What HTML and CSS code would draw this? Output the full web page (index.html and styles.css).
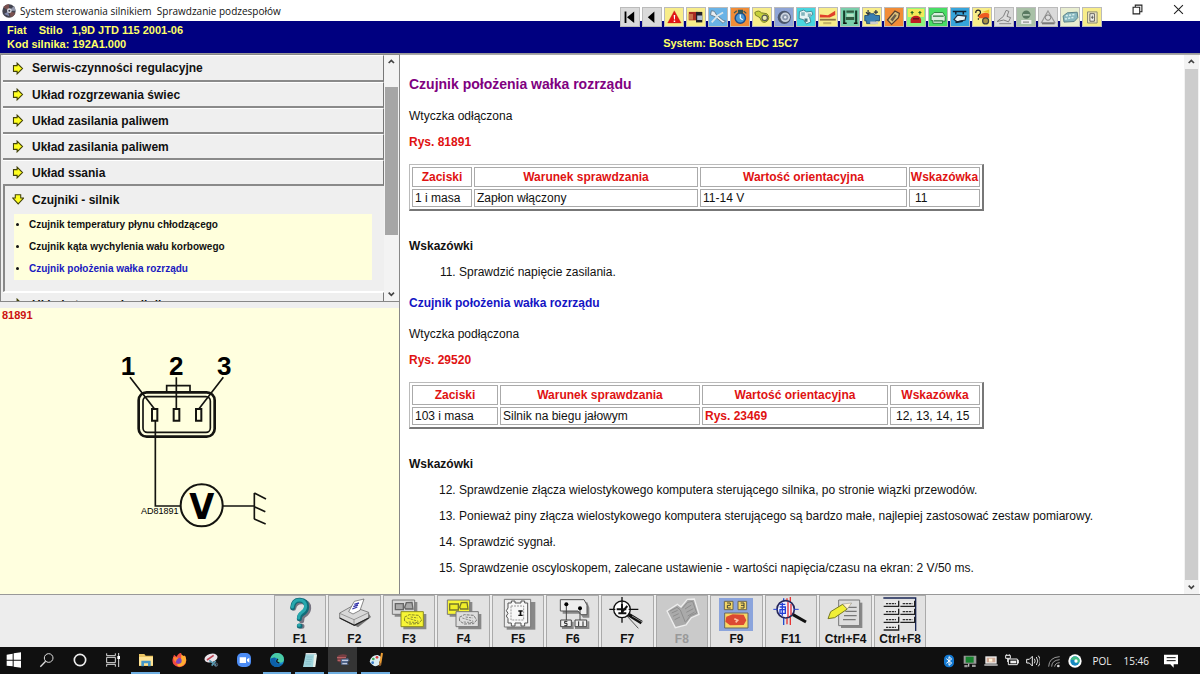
FILE: index.html
```html
<!DOCTYPE html>
<html lang="pl">
<head>
<meta charset="utf-8">
<title>System sterowania silnikiem</title>
<link rel="stylesheet" href="styles.css">
</head>
<body>
<div class="app">
  <header class="titlebar">
    <svg class="app-icon" viewBox="0 0 42 42"><circle cx="21" cy="21" r="20" fill="#434450"/><path d="M21 21 4 10A20 20 0 0 1 21 1zM21 21 40 27A20 20 0 0 1 26 40z" fill="#79514f"/><path d="M21 21 35 7A20 20 0 0 1 41 20z" fill="#9297ab"/><path d="M6 30 18 23l4 14z" fill="#8088ab"/><circle cx="22" cy="20" r="7" fill="#d8dce6"/><circle cx="22" cy="20" r="3" fill="#3d4152"/></svg>
    <h1 class="title">System sterowania silnikiem&nbsp; Sprawdzanie podzespołów</h1>
    <div class="window-controls">
      <button class="win-btn" aria-label="Przywróć"><svg viewBox="0 0 30 30"><path d="M3 9h18v18H3zM9 9V3h18v18h-6" fill="none" stroke="#222" stroke-width="3"/></svg></button>
      <button class="win-btn" aria-label="Zamknij"><svg viewBox="0 0 30 30"><path d="m3 3 24 24M27 3 3 27" stroke="#222" stroke-width="3"/></svg></button>
    </div>
  </header>

  <div class="toolbar">
    <button class="tool grey" aria-label="Pierwszy"><svg viewBox="0 0 60 60"><path d="M12 12h6v38h-6zM44 12v38L20 31z"/></svg></button>
    <button class="tool grey" aria-label="Wstecz"><svg viewBox="0 0 60 60"><path d="M38 12v38L16 31z"/></svg></button>
    <button class="tool yellow" aria-label="Ostrzeżenia"><svg viewBox="0 0 60 60"><path d="M31 9 54 50H9z" fill="#e41414" stroke="#a22"/><path d="M29 23h5l-1 15h-3zM29 42h5v5h-5z" fill="#fff"/></svg></button>
    <button class="tool yellow" aria-label="Identyfikacja"><svg viewBox="0 0 60 60"><path d="M6 13h30v28H6z" fill="#a62a22"/><path d="M6 20h14v19H6z" fill="#c9714a"/><path d="M30 13h21v35H30z" fill="#221f29"/><path d="M34 25h17v15H34z" fill="#aebdd2"/></svg></button>
    <button class="tool sky" aria-label="Narzędzia"><svg viewBox="0 0 60 60"><path d="m8 9 10 2 7 12 22 18 8 2-8 8-27-22-15-6z" fill="#e8eef2" stroke="#627a8c" stroke-width="3"/><path d="m9 48 21-23 17-10" stroke="#d7e4ea" stroke-width="6" fill="none"/></svg></button>
    <button class="tool orange" aria-label="Czasy napraw"><svg viewBox="0 0 60 60"><circle cx="31" cy="34" r="17" fill="#4a9ad4" stroke="#1e4e8c" stroke-width="5"/><path d="M25 8h13v8H25zM10 17l9-8M51 18l-9-8" fill="#355" stroke="#355" stroke-width="4"/><path d="M31 34V22M31 34l8 5" stroke="#fff" stroke-width="4"/></svg></button>
    <button class="tool yellow" aria-label="Pasek rozrządu"><svg viewBox="0 0 60 60"><path d="M6 15q13-10 22 1l18 3q12 12 2 24-12 10-21-1-2-12-11-14Q6 27 6 15z" fill="#c6d03b" stroke="#70781e" stroke-width="3"/><circle cx="39" cy="33" r="9" fill="#ececac" stroke="#555" stroke-width="4"/></svg></button>
    <button class="tool blue" aria-label="Opony"><svg viewBox="0 0 60 60"><circle cx="31" cy="31" r="22" fill="#4b566b"/><circle cx="34" cy="31" r="16" fill="#ccd4df"/><circle cx="34" cy="31" r="10" fill="#8996aa"/><circle cx="34" cy="31" r="4" fill="#e9edf5"/></svg></button>
    <button class="tool cyan" aria-label="Klimatyzacja"><svg viewBox="0 0 60 60"><path d="m8 12 14-5 10 6 17-2 4 10-11 9 4 17-15 6-9-14-15-4z" fill="#e6f4f4" stroke="#3b8492" stroke-width="3"/><path d="M14 14h12v12H14zM36 18h12v12H36z" fill="#83b5bc"/><path d="M25 35h10v11H25z" fill="#437984"/></svg></button>
    <button class="tool yellow" aria-label="Geometria"><svg viewBox="0 0 60 60"><path d="M3 22 30 24 54 9v14l-18 9H3z" fill="#e0402a"/><path d="M3 36h53v6H3z" fill="#8c7446"/><path d="M14 47h27v7H14z" fill="#c6b568"/></svg></button>
    <button class="tool mint" aria-label="Podnośnik"><svg viewBox="0 0 60 60"><path d="M7 8h7v42H7zM47 8h7v42h-7z" fill="#173e2b"/><path d="M18 8h25v8H18zM16 30h28v10H16z" fill="#325d42"/><path d="M20 20h22v9H20z" fill="#b7e3c3"/><path d="M7 48h12v5H7zM43 48h12v5H43z" fill="#111"/></svg></button>
    <button class="tool yellow" aria-label="Silnik"><svg viewBox="0 0 60 60"><path d="M6 25h12l5-6h14l4 6h14v18H42v9H12v-9H6z" fill="#397fb1" stroke="#244d76" stroke-width="3"/><path d="M17 7v15M10 14l7 8 7-8M43 7v14M36 14h14" stroke="#283542" stroke-width="4" fill="none"/><path d="M24 45h26v9H24z" fill="#ccc"/></svg></button>
    <button class="tool orange" aria-label="Świece"><svg viewBox="0 0 60 60"><path d="m8 40 25-30 15 8-3 14-23 23z" fill="#dbc17b" stroke="#574031" stroke-width="4"/><path d="m18 38 15-18 6 5-14 20z" fill="#685c4a"/></svg></button>
    <button class="tool lime" aria-label="Diagnostyka"><svg viewBox="0 0 60 60"><path d="M3 3h54v27H3z" fill="#f3e957"/><path d="M12 15h10M38 15h10M17 10v12M43 10v12" stroke="#236724" stroke-width="4"/><path d="M12 38q4-12 18-12t17 12v12H12z" fill="#c11f24"/><path d="M20 36h20" stroke="#501318" stroke-width="4"/></svg></button>
    <button class="tool green" aria-label="Druk"><svg viewBox="0 0 60 60"><path d="M17 15h29l8 13v16H45v7H13v-9H7V25z" fill="#dcefe0" stroke="#277c3b" stroke-width="3"/><path d="M13 27h36M16 43h30" stroke="#277c3b" stroke-width="4"/></svg></button>
    <button class="tool azure" aria-label="Układ hamulcowy"><svg viewBox="0 0 60 60"><path d="M6 12h45M16 12v10M41 12v10" stroke="#123" stroke-width="5"/><path d="m10 38 12-14 28 3-3 13-27 6z" fill="#e8f4f8" stroke="#234" stroke-width="4"/><path d="m15 48 24-4" stroke="#123" stroke-width="6"/></svg></button>
    <button class="tool yellow" aria-label="Kody usterek"><svg viewBox="0 0 60 60"><path d="M9 17q0-10 8-10t8 8q0 5-7 9v5M18 34v5" fill="none" stroke="#222" stroke-width="4"/><path d="M18 27q18-18 36-8v15H20z" fill="#ef5b20"/><path d="M30 13 54 5v12z" fill="#eec72e"/><circle cx="42" cy="43" r="10" fill="#a89248" stroke="#444" stroke-width="4"/></svg></button>
    <button class="tool grey" aria-label="Poduszka"><svg viewBox="0 0 60 60"><path d="M7 45 28 28l9-20 9 3-6 17 12 4-7 14-16-6z" fill="#ddd" stroke="#777" stroke-width="3"/><path d="M14 52h40" stroke="#999" stroke-width="4"/></svg></button>
    <button class="tool sage" aria-label="Immobiliser"><svg viewBox="0 0 60 60"><circle cx="31" cy="22" r="14" fill="#597961"/><path d="M20 23h22" stroke="#bfd2bf" stroke-width="5"/><path d="M14 40h34v13H14z" fill="#eee"/><path d="M20 47h20" stroke="#888" stroke-width="4"/></svg></button>
    <button class="tool grey" aria-label="Hamulce"><svg viewBox="0 0 60 60"><path d="M30 10 53 49H8z" fill="none" stroke="#999" stroke-width="4"/><circle cx="30" cy="32" r="9" fill="#ddd" stroke="#777" stroke-width="3"/><path d="M10 52h42" stroke="#777" stroke-width="5"/></svg></button>
    <button class="tool pale" aria-label="Zespół napędowy"><svg viewBox="0 0 60 60"><path d="m7 27 14-11 33-2 2 18-12 13-34 2z" fill="#88b7bf" stroke="#527b83" stroke-width="3"/><path d="m16 26 31-5M13 37l31-6" stroke="#d6eeee" stroke-width="5" stroke-dasharray="7 4"/></svg></button>
    <button class="tool yellow" aria-label="Schematy"><svg viewBox="0 0 60 60"><path d="M15 13h32v37H15z" fill="#eee5be" stroke="#858571" stroke-width="3"/><path d="M23 19h15v25H23zM31 25v12M27 31h8" fill="#f8f8ef" stroke="#555" stroke-width="3"/></svg></button>
  </div>

  <div class="vehicle">
    <div class="vehicle-id">
      <div>Fiat&nbsp;&nbsp;&nbsp; Stilo&nbsp;&nbsp; 1,9D JTD 115 2001-06</div>
      <div>Kod silnika: 192A1.000</div>
    </div>
    <div class="system">System: Bosch EDC 15C7</div>
  </div>

  <main class="panes">
    <aside class="side">
      <div class="nav-frame">
        <nav class="nav">
          <button class="nav-item"><svg class="arrow" viewBox="0 0 33 36"><path d="M4 10h10V3l15 15-15 15v-7H4z"/></svg>Serwis-czynności regulacyjne</button>
          <button class="nav-item"><svg class="arrow" viewBox="0 0 33 36"><path d="M4 10h10V3l15 15-15 15v-7H4z"/></svg>Układ rozgrzewania świec</button>
          <button class="nav-item"><svg class="arrow" viewBox="0 0 33 36"><path d="M4 10h10V3l15 15-15 15v-7H4z"/></svg>Układ zasilania paliwem</button>
          <button class="nav-item"><svg class="arrow" viewBox="0 0 33 36"><path d="M4 10h10V3l15 15-15 15v-7H4z"/></svg>Układ zasilania paliwem</button>
          <button class="nav-item"><svg class="arrow" viewBox="0 0 33 36"><path d="M4 10h10V3l15 15-15 15v-7H4z"/></svg>Układ ssania</button>
          <div class="nav-open">
            <button class="nav-item open" aria-expanded="true"><svg class="arrow" viewBox="0 0 33 36"><path d="M9 5h15v9h8L17 30 2 14h7z"/></svg>Czujniki - silnik</button>
            <ul class="sub">
              <li><a href="#temp">Czujnik temperatury płynu chłodzącego</a></li>
              <li><a href="#kat">Czujnik kąta wychylenia wału korbowego</a></li>
              <li><a class="current" href="#walek">Czujnik położenia wałka rozrządu</a></li>
            </ul>
          </div>
          <button class="nav-item"><svg class="arrow" viewBox="0 0 33 36"><path d="M4 10h10V3l15 15-15 15v-7H4z"/></svg>Układ sterowania silnika</button>
        </nav>
        <div class="scroll">
          <svg class="chev" viewBox="0 0 42 42"><path d="m14 24 8-8 8 8"/></svg>
          <div class="track"><div class="thumb dark"></div></div>
          <svg class="chev" viewBox="0 0 42 42"><path d="m14 17 8 8 8-8"/></svg>
        </div>
      </div>
      <section class="figure">
        <div class="fig-no">81891</div>
        <svg class="connector" viewBox="60 30 480 540">
          <g fill="none" stroke="#141410">
            <rect x="116" y="157" width="228" height="133" rx="24" stroke-width="8"/>
            <rect x="129" y="170" width="202" height="107" rx="13" stroke-width="5"/>
            <path d="M200 155v-18h70v18" stroke-width="5"/>
            <path d="m90 112 73 94M229 112v94M370 112l-73 94M166 243v255h75M369 498h94M463 459v79M463 459l35 18M463 500l33 15M463 537l34 15" stroke-width="5"/>
            <path d="M156 207h16v35h-16zM221 207h17v35h-17zM288 207h16v35h-16z" stroke-width="6"/>
            <circle cx="305" cy="496" r="63" stroke-width="6"/>
          </g>
          <g class="pins"><text x="84" y="105">1</text><text x="229" y="105">2</text><text x="373" y="105">3</text></g>
          <text class="volt" x="305" y="538">V</text>
          <text class="drawing-no" x="179" y="523">AD81891</text>
        </svg>
      </section>
    </aside>

    <section class="content">
      <article class="doc">
        <h2 class="heading">Czujnik położenia wałka rozrządu</h2>
        <p>Wtyczka odłączona</p>
        <p><a class="ref" href="#81891">Rys. 81891</a></p>
        <table class="data">
          <colgroup><col class="w62"><col class="w226"><col class="w209"><col></colgroup>
          <tr><th>Zaciski</th><th>Warunek sprawdzania</th><th>Wartość orientacyjna</th><th>Wskazówka</th></tr>
          <tr><td>1 i masa</td><td>Zapłon włączony</td><td>11-14 V</td><td class="hint">11</td></tr>
        </table>
        <h4 class="notes-title">Wskazówki</h4>
        <ol class="notes" start="11"><li>Sprawdzić napięcie zasilania.</li></ol>
        <h3 class="subheading">Czujnik położenia wałka rozrządu</h3>
        <p>Wtyczka podłączona</p>
        <p><a class="ref" href="#29520">Rys. 29520</a></p>
        <table class="data">
          <colgroup><col class="w88"><col class="w202"><col class="w188"><col></colgroup>
          <tr><th>Zaciski</th><th>Warunek sprawdzania</th><th>Wartość orientacyjna</th><th>Wskazówka</th></tr>
          <tr><td>103 i masa</td><td>Silnik na biegu jałowym</td><td><a class="ref" href="#23469">Rys. 23469</a></td><td class="hint">12, 13, 14, 15</td></tr>
        </table>
        <h4 class="notes-title">Wskazówki</h4>
        <ol class="notes" start="12">
          <li>Sprawdzenie złącza wielostykowego komputera sterującego silnika, po stronie wiązki przewodów.</li>
          <li>Ponieważ piny złącza wielostykowego komputera sterującego są bardzo małe, najlepiej zastosować zestaw pomiarowy.</li>
          <li>Sprawdzić sygnał.</li>
          <li>Sprawdzenie oscyloskopem, zalecane ustawienie - wartości napięcia/czasu na ekran: 2 V/50 ms.</li>
        </ol>
      </article>
      <div class="scroll">
        <svg class="chev" viewBox="0 0 42 42"><path d="m14 24 8-8 8 8"/></svg>
        <div class="track"><div class="thumb light"></div></div>
        <svg class="chev" viewBox="0 0 42 42"><path d="m14 17 8 8 8-8"/></svg>
      </div>
    </section>
  </main>

  <div class="fkeys">
    <div class="fkeys-row">
      <button class="fkey"><svg viewBox="0 0 120 102"><path d="M41 34Q45 13 66 14t20 20q-1 13-13 20-8 5-8 17M64 88h2" fill="none" stroke="#777481" stroke-width="15" stroke-linecap="round"/><path d="M38 32Q40 9 60 10t20 20q-1 13-13 20-9 5-9 15M58 87h2" fill="none" stroke="#126c78" stroke-width="15" stroke-linecap="round"/><path d="M37 30Q40 9 58 9t19 19q-1 12-13 19-8 5-8 16M56 85h2" fill="none" stroke="#28a8ae" stroke-width="9" stroke-linecap="round"/></svg>F1</button>
      <button class="fkey"><svg viewBox="0 0 120 102"><path d="m26 65 46 26 39-31-8-12-67-6z" fill="#777"/><path d="m17 48 36-20 51 18v17L61 85 17 63z" fill="#d8d8d8" stroke="#555" stroke-width="2"/><path d="m17 49 43 19 44-21M60 68v16" fill="none" stroke="#777" stroke-width="2"/><path d="m17 63 44 22 43-22" fill="none" stroke="#222" stroke-width="4"/><path d="m44 44 17-31 29-7-12 34-21 11z" fill="#fff" stroke="#555" stroke-width="2"/><path d="m61 22 14-4M58 29l14-5M55 36l15-6" stroke="#33a" stroke-width="4"/></svg>F2</button>
      <button class="fkey"><svg viewBox="0 0 120 102"><path d="M17 15h68v44H17zM43 51h69v46H43z" fill="#888"/><path d="M10 9h67v43H10z" fill="#d8d8d8" stroke="#777" stroke-width="3"/><path d="M19 20h24v18H19zM47 31l5-14 17-1 3 20H50z" fill="#aaa" stroke="#666" stroke-width="4"/><path d="M36 44h67v45H36z" fill="#f7f536" stroke="#8d8d20" stroke-width="3"/><path d="m46 61 15-8 28 2 9 14-9 11-28 1-14-9z" fill="none" stroke="#858525" stroke-width="3" stroke-dasharray="9 3"/><path d="m55 63 33 10M65 60l21 3M59 75l31 2" stroke="#8b8d33" stroke-width="3" stroke-dasharray="7 3"/></svg>F3</button>
      <button class="fkey"><svg viewBox="0 0 120 102"><path d="M17 15h68v44H17zM43 51h69v46H43z" fill="#888"/><path d="M10 9h67v43H10z" fill="#f7f536" stroke="#777" stroke-width="3"/><path d="M17 21h26v18H17zM47 31l5-14 17-1 3 20H50z" fill="#efed29" stroke="#77772c" stroke-width="4"/><path d="M36 44h67v45H36z" fill="#dedede" stroke="#777" stroke-width="3"/><path d="m46 61 15-8 28 2 9 14-9 11-28 1-14-9z" fill="none" stroke="#777" stroke-width="3" stroke-dasharray="9 3"/><path d="m55 63 33 10M65 60l21 3M59 75l31 2" stroke="#888" stroke-width="3" stroke-dasharray="7 3"/></svg>F4</button>
      <button class="fkey"><svg viewBox="0 0 120 102"><path d="M26 15h86v83H26z" fill="#888"/><path d="M19 7h79v83H19z" fill="#eee" stroke="#777" stroke-width="3"/><path d="M30 18h10v-6h11v6h18v-6h11v6h9v60h-9v9H69v-9H51v9H40v-9H30V65l-5-8 5-8-5-8 5-8z" fill="#f8f8f8" stroke="#555" stroke-width="3"/><path d="M39 27h38v42H39z" fill="none" stroke="#999" stroke-width="3" stroke-dasharray="6 3"/><path d="M61 40h13v4h-4v9h4v4H61v-4h4v-9h-4z" fill="#111"/></svg>F5</button>
      <button class="fkey"><svg viewBox="0 0 120 102"><path d="M29 16h74l6 16v30H90l-8-12H29z" fill="#888"/><path d="M22 8h71l9 16v29H84l-9-11H22z" fill="#eee" stroke="#555" stroke-width="3"/><path d="M27 93h32V74M66 93h40V73" stroke="#888" stroke-width="6" fill="none"/><path d="M40 22v47M81 34v35M23 69h32v20H23zM66 69h35v20H66z" fill="#eee" stroke="#444" stroke-width="3"/><circle cx="40" cy="22" r="6"/><circle cx="81" cy="34" r="6"/><path d="M43 73h-8v6h7v7h-8M77 73v14M90 73v14" stroke="#222" stroke-width="3" fill="none"/></svg>F6</button>
      <button class="fkey"><svg viewBox="0 0 120 102"><path d="m59 56 35 38" stroke="#555" stroke-width="3"/><circle cx="45" cy="37" r="25" fill="#fff" stroke="#111" stroke-width="4"/><path d="M45 0v20M7 37h18M65 37h29M45 62v15" stroke="#111" stroke-width="4"/><path d="M45 20v28M29 37h29M45 45 61 27M34 49h24" stroke="#111" stroke-width="6"/><path d="m65 53 39 24" stroke="#111" stroke-width="11"/><path d="m75 57 31 18" stroke="#888" stroke-width="3"/></svg>F7</button>
      <button class="fkey" disabled><svg viewBox="0 0 120 102"><path d="m15 42 31-20 11 8 19-23 21-1 14 46-23 10-16 22-32 8z" fill="#aaa" stroke="#eee" stroke-width="4"/><path d="m24 42 21-11 10 8 15 37M61 34l16-18 15-3 12 35-19 8-13 18M29 48l18-8M33 58l17-8M38 68l16-8M69 36l19-12M73 46l21-11M77 57l21-12" fill="none" stroke="#8e8e8e" stroke-width="3"/></svg>F8</button>
      <button class="fkey"><svg viewBox="0 0 120 102"><path d="M9 3h102v99H9z" fill="#8ba4dc"/><path d="M25 13h26v25H25zM66 13h26v25H66z" fill="#f4d768" stroke="#6b6750" stroke-width="3"/><path d="M33 18h10v7H34v8h10M74 18h10v15H74M75 25h9" stroke="#443" stroke-width="3" fill="none"/><path d="M26 48h70v45H26z" fill="#f7d967" stroke="#666" stroke-width="3"/><path d="m31 59 19-7 33 1 8 17-8 14-41 1-14-11z" fill="#dc4932"/><path d="m55 65 10 5-6 6" stroke="#ffc2a5" stroke-width="5" fill="none"/></svg>F9</button>
      <button class="fkey"><svg viewBox="0 0 120 102"><path d="M38 4v80" stroke="#224cce" stroke-width="4"/><path d="M48 4v78M58 0v84" stroke="#e53434" stroke-width="4"/><circle cx="44" cy="37" r="26" fill="#edf1ff" stroke="#26275b" stroke-width="5"/><path d="M26 22h17M26 30h17v19H27V38h16M34 17v39" fill="none" stroke="#2540d6" stroke-width="4"/><path d="M51 15v45M60 21v33" stroke="#df3038" stroke-width="4"/><path d="M7 37h12M69 37h14" stroke="#2540d6" stroke-width="3"/><path d="m66 53 39 22" stroke="#111" stroke-width="9"/></svg>F11</button>
      <button class="fkey"><svg viewBox="0 0 120 102"><path d="M45 17h64v76H45z" fill="#888"/><path d="M38 9h63v77H38z" fill="#ddd" stroke="#777" stroke-width="3"/><path d="M61 31h31M58 43h34M54 56h38M51 68h38" stroke="#777" stroke-width="4"/><path d="m50 22-36 22-8 21 20-3 38-26z" fill="#f1ef35" stroke="#777923" stroke-width="3"/><path d="m50 21 27-3-13 18z" fill="#fff4d2" stroke="#555"/></svg>Ctrl+F4</button>
      <button class="fkey"><svg viewBox="0 0 120 102"><path d="M10 3h97v99" fill="none" stroke="#182656" stroke-width="4"/><path d="M11 11h45v17H11zM61 11h43v17H61zM11 35h45v17H11zM61 35h43v17H61zM11 59h45v17H11zM61 59h43v17H61zM11 83h45v16H11z" fill="#e9e9e9"/><path d="M11 28h45V11M61 28h43V11M11 52h45V35M61 52h43V35M11 76h45V59M61 76h43V59M11 99h45V83" fill="none" stroke="#222" stroke-width="4"/><path d="M18 20h30M68 20h29M18 44h30M68 44h29M18 68h30M68 68h29M18 91h30" stroke="#333" stroke-width="4" stroke-dasharray="7 2"/></svg>Ctrl+F8</button>
    </div>
  </div>

  <footer class="taskbar">
    <div class="apps">
      <button class="task" aria-label="Start"><svg viewBox="0 0 48 48"><path d="m2 8 18-3v18H2zM23 4l22-3v22H23zM2 26h18v17L2 41zM23 26h22v21l-22-3z" fill="#fff"/></svg></button>
      <button class="task" aria-label="Szukaj"><svg viewBox="0 0 48 48"><circle cx="29" cy="18" r="13" fill="none" stroke="#ddd" stroke-width="3"/><path d="M20 28 4 44" stroke="#ddd" stroke-width="4"/></svg></button>
      <button class="task" aria-label="Cortana"><svg viewBox="0 0 48 48"><circle cx="24" cy="24" r="17" fill="none" stroke="#eee" stroke-width="5"/></svg></button>
      <button class="task" aria-label="Widok zadań"><svg viewBox="0 0 48 48"><path d="M5 4v7h26V4M5 44v-7h26v7M5 16h26v16H5zM41 3v42" fill="none" stroke="#ddd" stroke-width="3"/><path d="M37 12h8v9h-8z" fill="#fff"/></svg></button>
      <button class="task run" aria-label="Eksplorator"><svg viewBox="0 0 48 48"><path d="M3 6h16l4 5h22v31H3z" fill="#eac462"/><path d="M3 15h42v25H3z" fill="#ffe394"/><path d="M10 43V26h28v17h-8V34H18v9z" fill="#4497c8"/></svg></button>
      <button class="task" aria-label="Firefox"><svg viewBox="0 0 48 48"><path d="M5 20 9 8l8 6Q23 2 30 3q0 7 8 9l4-1q10 20-5 31-18 9-30-6-4-7-2-16z" fill="#f34b42"/><path d="M30 3q0 7 8 9l4-1q9 18-5 29-12 8-20-2Q34 36 30 3z" fill="#ffad31"/><circle cx="23" cy="26" r="9" fill="#7c46bd"/><path d="m7 15 17 2q-8 3-10 14-7-7-7-16z" fill="#ff882f"/></svg></button>
      <button class="task" aria-label="Wycinanie"><svg viewBox="0 0 48 48"><ellipse cx="24" cy="18" rx="20" ry="13" fill="#e9e4ea" transform="rotate(-18 24 18)"/><path d="m12 24 20-14" stroke="#bd4554" stroke-width="5"/><path d="m19 25 21 16M38 27 26 41" stroke="#5899b1" stroke-width="5"/><circle cx="39" cy="38" r="5" fill="none" stroke="#567" stroke-width="3"/></svg></button>
      <button class="task" aria-label="Zoom"><svg viewBox="0 0 48 48"><rect x="3" y="3" width="42" height="42" rx="15" fill="#4c8cf4"/><path d="M11 16h19v17H11zM33 22l7-5v15l-7-5z" fill="#fff"/></svg></button>
      <button class="task run" aria-label="Edge"><svg viewBox="0 0 48 48"><circle cx="24" cy="24" r="21" fill="#1789cf"/><path d="M4 20Q10 2 27 3q18 3 18 20 0 9-13 9-8 0-6-6 3-14-22-6z" fill="#4acba5"/><path d="M5 20q18-9 15 4-3 15 21 12-10 12-24 8Q2 37 5 20z" fill="#0d60a9"/><path d="M27 21q-10 9 4 12" stroke="#131b26" stroke-width="4" fill="none"/></svg></button>
      <button class="task run" aria-label="Notatnik"><svg viewBox="0 0 48 48"><path d="M11 6h33l-6 39H3z" fill="#9fd4dc"/><path d="M36 8h9l-5 37h-7z" fill="#e7f0e9"/><path d="M11 5h32" stroke="#ddd" stroke-width="4"/><path d="M14 15h18M13 22h17M11 29h17M10 36h17" stroke="#7fb7c1" stroke-width="2"/></svg></button>
      <button class="task run active" aria-label="System sterowania"><svg viewBox="0 0 48 48"><path d="M7 12q12-8 29-3l-3 9-14 2-2 12-10-4z" fill="#773e42"/><path d="M6 17h27M8 25h8" stroke="#b86266" stroke-width="4"/><path d="m18 22 21-3 5 7-7 4 4 8H18z" fill="#50658a"/><path d="M21 25h18M22 35h14" stroke="#c3cbdf" stroke-width="4"/></svg></button>
      <button class="task run" aria-label="Paint"><svg viewBox="0 0 48 48"><path d="M5 29Q10 8 29 9q16 5 9 16-8 6-2 12-17 14-31-8z" fill="#d9edf3"/><circle cx="16" cy="21" r="4" fill="#46aa57"/><circle cx="27" cy="16" r="4" fill="#d63c39"/><circle cx="14" cy="32" r="4" fill="#367ac8"/><path d="m42 3-6 37" stroke="#ec9d34" stroke-width="6"/><path d="m36 32-5 12 9-7z" fill="#8b552d"/></svg></button>
    </div>
    <div class="tray">
      <svg viewBox="0 0 42 42"><rect x="6" y="2" width="30" height="38" rx="14" fill="#1379d2"/><path d="m13 14 16 13-8 7V8l8 7-16 13" fill="none" stroke="#fff" stroke-width="3"/></svg>
      <svg viewBox="0 0 42 42"><path d="M2 5h38v24H2zM4 33h10v7H4zM27 32h11v7H27z" fill="#999"/><path d="M8 8h24v18H8z" fill="#16822d"/><path d="M17 29v9" stroke="#bbb" stroke-width="4"/></svg>
      <svg viewBox="0 0 42 42"><path d="M4 7h34v22H4z" fill="#eee"/><path d="M8 11h26v14H8z" fill="#d0aa97"/><path d="M1 31h40v4H1z" fill="#ddd"/><path d="M15 14h10v9H15z" fill="#fff4d7"/></svg>
      <svg viewBox="0 0 42 42"><path d="M10 15h27v17H10zM37 19h4v8h-4z" fill="none" stroke="#eee" stroke-width="3"/><path d="M16 20h17v8H16z" fill="#eee"/><path d="M2 4h14v9H2zM5 1v4M13 1v4M8 13v11" fill="#111" stroke="#eee" stroke-width="3"/></svg>
      <svg viewBox="0 0 42 42"><path d="M2 16h8l9-9v29l-9-9H2z" fill="none" stroke="#eee" stroke-width="3"/><path d="M25 14q5 7 0 14M31 9q9 12 0 24M37 5q12 16 0 32" fill="none" stroke="#ddd" stroke-width="3"/></svg>
      <svg viewBox="0 0 42 42"><path d="M5 38Q6 10 38 8M14 38Q14 19 38 17M23 38q1-11 15-12" fill="none" stroke="#999" stroke-width="3"/><circle cx="34" cy="36" r="4" fill="#ddd"/></svg>
      <svg viewBox="0 0 42 42"><circle cx="21" cy="21" r="20" fill="#fff"/><circle cx="21" cy="21" r="14" fill="#1689c0"/><path d="M8 18Q12 6 24 8q13 3 11 15-4 5-12 3 1-11-15-8z" fill="#45bd85"/><circle cx="24" cy="21" r="5" fill="#fff"/></svg>
      <span class="lang">POL</span>
      <span class="clock">15:46</span>
      <svg viewBox="0 0 42 42"><path d="M0 2h42v29H29v10L19 31H0z" fill="#fff"/><path d="M8 11h27M8 20h27" stroke="#111" stroke-width="3"/></svg>
    </div>
  </footer>
</div>
</body>
</html>
```

FILE: styles.css
```css
* { box-sizing: border-box; }

body {
  margin: 0;
  background: #fff;
  color: #111;
  font: 12px/16px "Liberation Sans", Arial, sans-serif;
}

button {
  margin: 0;
  padding: 0;
  border: 0;
  background: none;
  color: inherit;
  font: inherit;
}

svg { display: block; flex: none; }
a { color: inherit; text-decoration: none; }

.app {
  position: relative;
  display: flex;
  flex-direction: column;
  height: 100vh;
  overflow: hidden;
}

/* Title bar */
.titlebar {
  display: flex;
  align-items: center;
  gap: 4px;
  height: 21px;
  flex: none;
  padding: 0 16px 0 2px;
}

.app-icon { width: 14px; height: 14px; }

.title {
  flex: 1;
  margin: 0;
  font: 10px/16px "Open Sans", "Noto Sans", sans-serif;
}

.window-controls { display: flex; gap: 30px; padding-bottom: 3px; }
.win-btn svg { width: 11px; height: 11px; }

.toolbar {
  position: absolute;
  top: 7px;
  right: 98px;
  z-index: 1;
  display: flex;
  gap: 2px;
}

.tool {
  width: 20px;
  height: 20px;
  border: 1px solid #bbb;
  background: #ddd;
}

.tool svg { width: 18px; height: 18px; }
.tool.grey { background: #dadada; }
.tool.yellow { background: #f8ed8a; }
.tool.orange { background: #f18c36; }
.tool.sky { background: #69b3e6; }
.tool.blue { background: #8ea4d6; }
.tool.cyan { background: #48d5df; }
.tool.mint { background: #79ceaa; }
.tool.lime { background: #8cf37e; }
.tool.green { background: #48dd65; }
.tool.azure { background: #36a5db; }
.tool.sage { background: #a9c1a7; }
.tool.pale { background: #e9eed0; }

/* Vehicle banner */
.vehicle {
  display: flex;
  flex: none;
  height: 33px;
  padding: 2px 0 0 7px;
  border-bottom: 1px solid #999;
  background: #000080;
  color: #ffff66;
  font-size: 11px;
  font-weight: bold;
  line-height: 14px;
}

.vehicle-id { flex: 1; }
.system { flex: 0 0 45%; padding-top: 13px; }

/* Panes */
.panes {
  display: grid;
  grid-template-columns: 1fr 2fr;
  flex: 1;
  min-height: 0;
}

.side {
  display: flex;
  flex-direction: column;
  min-width: 0;
  min-height: 0;
  background: #efefef;
  border-right: 1px solid #888;
}

.nav-frame {
  display: flex;
  height: 248px;
  flex: none;
  border: 1px solid #888;
  border-right: 0;
}

.nav {
  flex: 1;
  overflow: hidden;
  padding-left: 2px;
}

.nav-item {
  display: flex;
  align-items: center;
  gap: 8px;
  width: 100%;
  height: 26px;
  padding-left: 9px;
  border-right: 1px solid #777;
  border-bottom: 2px solid #8a8a8a;
  border-top: 1px solid #fff;
  font-weight: bold;
  text-align: left;
}

.nav-item:first-child { height: 27px; }
.arrow { width: 12px; height: 13px; }
.arrow path { fill: #ffff20; stroke: #44440a; stroke-width: 3; }

.nav-open {
  height: 106px;
  border-left: 2px solid #888;
  border-bottom: 1px solid #fff;
}

.nav-item.open {
  padding-left: 7px;
  border: 0;
}

.sub {
  margin: 1px 12px 0 9px;
  padding: 0 0 0 15px;
  background: #ffffdc;
  font-size: 10px;
  font-weight: bold;
  line-height: 22px;
}

.sub .current { color: #1a1abf; }

.scroll {
  display: flex;
  flex-direction: column;
  width: 15px;
  flex: none;
  background: #f3f3f3;
}

.chev { width: 14px; height: 14px; }
.chev path { fill: none; stroke: #444; stroke-width: 5; }

.track { flex: 1; }
.thumb { width: 13px; margin: 0 auto; }
.thumb.dark { height: 68%; margin-top: 18px; background: #a6a6a6; }
.thumb.light { height: 100%; background: #cdcdcd; }

.figure {
  flex: 1;
  margin-top: 6px;
  padding: 0 2px;
  background: #ffffdf;
}

.fig-no {
  color: #cc1111;
  font-size: 11px;
  font-weight: bold;
  line-height: 14px;
}

.connector { width: 160px; height: 180px; margin: 28px auto 0; }
.pins text, .volt { font-weight: bold; text-anchor: middle; }
.pins text { font-size: 78px; }
.volt { font-size: 108px; font-family: "DejaVu Sans Condensed", "Liberation Sans", sans-serif; }
.drawing-no { font-size: 27px; text-anchor: middle; }

/* Document */
.content {
  display: flex;
  min-width: 0;
  min-height: 0;
  padding-right: 1px;
  border-top: 1px solid #aaa;
}

.doc { flex: 1; overflow: hidden; padding: 20px 0 0 9px; }

.doc p { margin: 0 0 10px; }

.heading {
  margin: 0 0 15px;
  color: #800080;
  font-size: 14px;
  line-height: 18px;
}

.subheading {
  margin: 0 0 15px;
  color: #1414c4;
  font-size: 12px;
  line-height: 16px;
}

.ref { color: #e01212; font-weight: bold; }

.data {
  width: 575px;
  margin: 14px 0 27px;
  border-style: solid;
  border-width: 1px 2px 2px 1px;
  border-color: #bbb #777 #777 #bbb;
  border-spacing: 2px;
  table-layout: fixed;
}

.w62 { width: 60px; }
.w226 { width: 224px; }
.w209 { width: 207px; }
.w88 { width: 86px; }
.w202 { width: 200px; }
.w188 { width: 186px; }

.data th, .data td {
  padding: 1px 2px;
  border: 1px solid #aaa;
  line-height: 16px;
  white-space: nowrap;
}

.data th { padding: 1px 0; color: #e01212; }
.data td { padding: 0 2px; }
.data .hint { padding-left: 5px; }

.notes-title { margin: 0 0 10px; font-size: 12px; line-height: 16px; }
.notes { margin: 0 0 15px; padding-left: 50px; }
.notes li { margin-bottom: 10px; }

/* Function keys */
.fkeys {
  flex: none;
  height: 53px;
  border-top: 1px solid #999;
  background: #ededed;
}

.fkeys-row {
  display: flex;
  gap: 2px;
  max-width: 653px;
  height: 100%;
  margin: 0 auto;
}

.fkey {
  display: flex;
  flex: 1;
  flex-direction: column;
  align-items: center;
  gap: 1px;
  padding-top: 1px;
  border: 1px solid #aaa;
  border-bottom: 0;
  background: #e2e2e2;
  font-weight: bold;
  line-height: 14px;
}

.fkey svg { width: 40px; height: 34px; }
.fkey:disabled { background: #cacaca; color: #999; }

/* Taskbar */
.taskbar {
  display: flex;
  justify-content: space-between;
  flex: none;
  height: 27px;
  background: #101010;
  color: #eee;
}

.apps { display: flex; gap: 4px; width: 390px; }

.task {
  display: flex;
  flex: 1;
  align-items: center;
  justify-content: center;
  border-bottom: 2px solid transparent;
}

.task svg { width: 16px; height: 16px; }
.task.run { border-bottom: 2px solid #6faee0; }
.task.active { background: #353535; }

.tray {
  display: flex;
  align-items: center;
  gap: 7px;
  padding-right: 22px;
  font: 10px/16px "Open Sans", "Noto Sans", sans-serif;
}

.tray svg { width: 14px; height: 14px; }
.lang { margin-left: 3px; }
.clock { margin: 0 8px 0 5px; }
```
